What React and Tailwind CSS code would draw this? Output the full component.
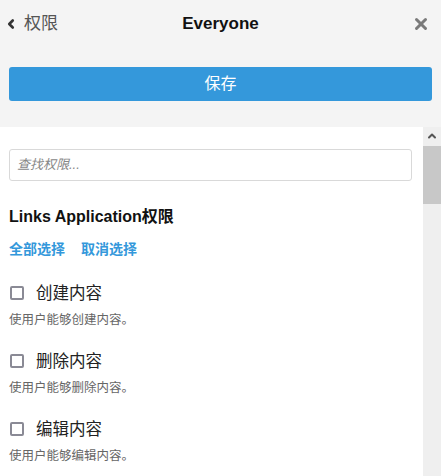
import { ChevronLeft, X, ChevronUp } from 'lucide-react';

const font = { fontFamily: '"Liberation Sans", "Noto Sans CJK SC", sans-serif' };

const perms = [
  { name: '创建内容', desc: '使用户能够创建内容。' },
  { name: '删除内容', desc: '使用户能够删除内容。' },
  { name: '编辑内容', desc: '使用户能够编辑内容。' },
];

export default function App() {
  return (
    <div className="w-[441px] h-[476px] bg-[#f4f4f4] flex flex-col overflow-hidden" style={font}>
      <div className="h-[48px] flex items-center px-[4px] relative">
        <div className="flex items-center text-[#555] text-[17px]">
          <ChevronLeft size={14} strokeWidth={4.5} className="text-[#333]" />
          <span className="ml-[6px]">权限</span>
        </div>
        <div className="absolute left-0 right-0 text-center font-bold text-[17px] text-[#111] pointer-events-none">
          Everyone
        </div>
        <X size={18} strokeWidth={4} className="ml-auto mr-[7px] text-[#7a7a7a]" />
      </div>
      <div className="px-[9px] pt-[19px] pb-[26px]">
        <button className="w-full h-[34px] bg-[#3498db] rounded-[3px] text-white text-[16px]">保存</button>
      </div>
      <div className="flex flex-1 min-h-0">
        <div className="flex-1 bg-white pl-[9px] pr-[11px] pt-[22px]">
          <div className="h-[32px] border border-[#d9d9d9] rounded-[3px] flex items-center px-[7px]">
            <span className="italic text-[#888] text-[13px]">查找权限...</span>
          </div>
          <h2 className="mt-[24px] font-bold text-[16px] text-[#111] leading-[24px]">Links Application权限</h2>
          <div className="mt-[10px] flex gap-[16px] text-[14px] font-bold text-[#3498db] leading-[20px]">
            <span>全部选择</span>
            <span>取消选择</span>
          </div>
          <div className="mt-[22px] flex flex-col gap-[20px]">
            {perms.map((p) => (
              <div key={p.name}>
                <div className="flex items-center h-[24px]">
                  <div className="w-[14px] h-[14px] border-2 border-[#8a8a95] rounded-[2px] ml-[1px]" />
                  <span className="ml-[12px] text-[16.5px] text-[#222]">{p.name}</span>
                </div>
                <div className="mt-[6px] text-[12.5px] text-[#666] leading-[18px]">{p.desc}</div>
              </div>
            ))}
          </div>
        </div>
        <div className="w-[18px] bg-[#efefef] flex flex-col items-center">
          <ChevronUp size={12} strokeWidth={4} className="mt-[3px] text-[#555]" />
          <div className="w-full h-[58px] bg-[#c8c8c8] mt-[4px]" />
        </div>
      </div>
    </div>
  );
}
